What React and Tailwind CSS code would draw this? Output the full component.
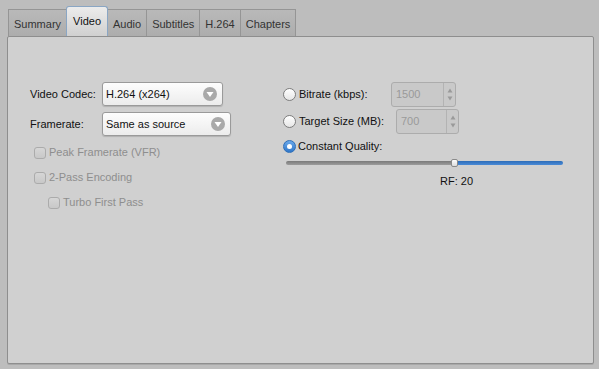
import React from "react";

function Tab({ label, active }) {
  if (active) {
    return (
      <div className="relative z-10 -ml-px flex h-[30px] items-start justify-center rounded-t-[3px] border border-b-0 border-[#8aa6c4] bg-gradient-to-b from-[#ececec] to-[#d0d0d0] px-[6px] pt-[6px] text-[#111]">
        {label}
      </div>
    );
  }
  return (
    <div className="-ml-px flex h-[27px] items-center justify-center border border-b-0 border-[#959595] bg-gradient-to-b from-[#b9b9b9] to-[#adadad] px-[5px] pt-[2px] text-[#333]">
      {label}
    </div>
  );
}

function Dropdown({ value, width }) {
  return (
    <div
      className={`flex h-[24px] items-center justify-between rounded-[3px] border border-[#9a9a9a] bg-gradient-to-b from-[#fdfdfd] to-[#ececec] pl-[3px] pr-[5px] text-[#111] shadow-[0_1px_1px_rgba(0,0,0,0.15)] ${width}`}
    >
      <span>{value}</span>
      <span className="flex h-[14px] w-[14px] items-center justify-center rounded-full bg-[#a9a9a9]">
        <svg width="8" height="7" viewBox="0 0 8 7">
          <path d="M0.5 1 L7.5 1 L4 6 Z" fill="#fff" />
        </svg>
      </span>
    </div>
  );
}

function Checkbox({ label }) {
  return (
    <div className="flex h-[13px] items-center gap-[3px] text-[#8e8e8e]">
      <span className="h-[12px] w-[12px] rounded-[3px] border border-[#ababab] bg-gradient-to-b from-[#d6d6d6] to-[#c8c8c8]" />
      <span>{label}</span>
    </div>
  );
}

function Radio({ checked }) {
  if (checked) {
    return (
      <span className="flex h-[13px] w-[13px] items-center justify-center rounded-full border border-[#2f6fb8] bg-gradient-to-b from-[#6aa8ea] to-[#2f77c9]">
        <span className="h-[5px] w-[5px] rounded-full bg-white" />
      </span>
    );
  }
  return (
    <span className="h-[13px] w-[13px] rounded-full border border-[#7d7d7d] bg-gradient-to-b from-[#ffffff] to-[#e6e6e6]" />
  );
}

function Spin({ value, width }) {
  return (
    <div className={`flex h-[25px] rounded-[3px] border border-[#acacac] bg-[#c9c9c9] ${width}`}>
      <div className="flex flex-1 items-center pl-[4px] text-[#9a9a9a]">{value}</div>
      <div className="flex w-[12px] flex-col items-center justify-center gap-[3px] border-l border-[#b3b3b3]">
        <svg width="6" height="5" viewBox="0 0 6 5">
          <path d="M3 0.5 L5.5 4.5 L0.5 4.5 Z" fill="#9a9a9a" />
        </svg>
        <svg width="6" height="5" viewBox="0 0 6 5">
          <path d="M0.5 0.5 L5.5 0.5 L3 4.5 Z" fill="#9a9a9a" />
        </svg>
      </div>
    </div>
  );
}

export default function App() {
  return (
    <div
      className="h-[369px] w-[599px] overflow-hidden bg-[#bdbdbd] px-[7px] pt-[7px] text-[11px]"
      style={{ fontFamily: '"Liberation Sans", Arial, sans-serif' }}
    >
      <div className="flex h-[29px] items-end pl-[2px]">
        <Tab label="Summary" />
        <Tab label="Video" active />
        <Tab label="Audio" />
        <Tab label="Subtitles" />
        <Tab label="H.264" />
        <Tab label="Chapters" />
      </div>
      <div className="h-[328px] w-[587px] rounded-[2px] border border-[#8e8e8e] bg-[#d0d0d0] shadow-[0_1px_0_#a8a8a8] pl-[22px] pt-[45px]">
        <div className="flex">
          <div className="flex w-[253px] flex-col">
            <div className="flex items-center">
              <span className="w-[72px] text-[#111]">Video Codec:</span>
              <Dropdown value="H.264 (x264)" width="w-[121px]" />
            </div>
            <div className="mt-[6px] flex items-center">
              <span className="w-[72px] text-[#111]">Framerate:</span>
              <Dropdown value="Same as source" width="w-[129px]" />
            </div>
            <div className="mt-[10px] flex flex-col gap-[12px] pl-[4px]">
              <Checkbox label="Peak Framerate (VFR)" />
              <Checkbox label="2-Pass Encoding" />
              <div className="pl-[14px]">
                <Checkbox label="Turbo First Pass" />
              </div>
            </div>
          </div>
          <div className="flex w-[280px] flex-col">
            <div className="flex items-center">
              <div className="flex w-[108px] items-center gap-[3px] text-[#111]">
                <Radio />
                <span>Bitrate (kbps):</span>
              </div>
              <Spin value="1500" width="w-[65px]" />
            </div>
            <div className="mt-[2px] flex items-center">
              <div className="flex w-[113px] items-center gap-[3px] text-[#111]">
                <Radio />
                <span>Target Size (MB):</span>
              </div>
              <Spin value="700" width="w-[63px]" />
            </div>
            <div className="mt-[4px] flex items-center gap-[2px] text-[#111]">
              <Radio checked />
              <span>Constant Quality:</span>
            </div>
            <div className="relative ml-[3px] mt-[4px] flex h-[8px] w-[277px] items-center">
              <div className="h-[4px] w-[168px] rounded-l-full bg-gradient-to-b from-[#7a7a7a] to-[#9c9c9c]" />
              <div className="h-[4px] flex-1 rounded-r-full bg-gradient-to-b from-[#2d6db8] to-[#4a8ad6]" />
              <div className="absolute left-[165px] top-0 h-[8px] w-[7px] rounded-[2px] border border-[#8a8a8a] bg-gradient-to-b from-[#ffffff] to-[#dcdcdc]" />
            </div>
            <div className="ml-[157px] mt-[6px] text-[#111]">RF: 20</div>
          </div>
        </div>
      </div>
    </div>
  );
}
